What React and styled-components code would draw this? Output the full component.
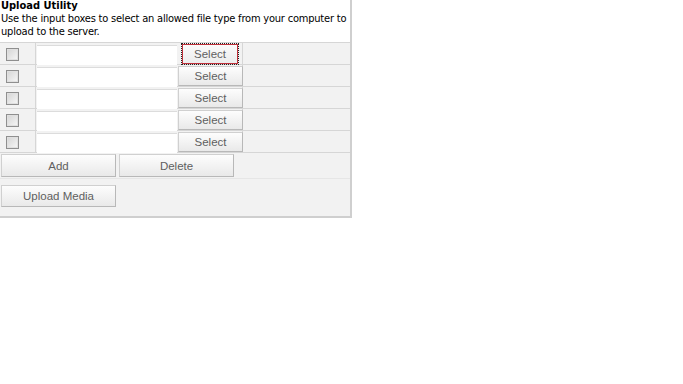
import React from "react";
import styled, { createGlobalStyle } from "styled-components";

const GlobalStyle = createGlobalStyle`
  body {
    margin: 0;
    background: white;
    font-family: "DejaVu Sans Condensed", "DejaVu Sans", Tahoma, sans-serif;
    font-size: 11px;
    color: black;
  }
`;

const Panel = styled.div`
  width: 350px;
  background: #f2f2f2;
  border-right: 2px solid #cfcfcf;
  border-bottom: 2px solid #cfcfcf;
  padding-bottom: 9px;
`;

const Header = styled.div`
  background: white;
  padding: 0 0 4px 1px;
`;

const Title = styled.div`
  font-weight: bold;
  font-size: 11px;
  line-height: 12px;
`;

const Intro = styled.div`
  line-height: 13px;
  letter-spacing: -0.2px;
`;

const FileTable = styled.div`
  border-top: 1px solid #d6d6d6;
  border-bottom: 1px solid #d6d6d6;
`;

const FileRow = styled.div`
  display: grid;
  grid-template-columns: 36px 141px 66px 1fr;
  height: 21px;
  border-bottom: 1px solid #d6d6d6;
  &:last-child {
    border-bottom: none;
  }
`;

const CheckCell = styled.div`
  display: flex;
  align-items: center;
  padding-left: 6px;
  border-right: 1px solid #d6d6d6;
`;

const CheckBox = styled.span`
  width: 11px;
  height: 11px;
  border: 1px solid #8f8f8f;
  background: linear-gradient(135deg, #d4d4d4, #f7f7f7);
  box-shadow: inset 0 0 0 1px #e0e0e0;
`;

const InputCell = styled.div`
  padding: 2px 0 0 1px;
`;

const TextBox = styled.div`
  height: 19px;
  background: white;
  border-top: 1px solid #dcdcdc;
`;

const ButtonCell = styled.div`
  padding: 1px 0 0 1px;
  border-right: 1px solid #d6d6d6;
`;

const Button = styled.button`
  display: block;
  width: ${(p) => p.$width}px;
  height: ${(p) => p.$height || 20}px;
  margin: 0;
  padding: 0;
  font-family: "Liberation Sans", Arial, sans-serif;
  font-size: 11.5px;
  color: #5f5f5f;
  background: linear-gradient(#fdfdfd, #e9e9e9);
  border: 1px solid #d0d0d0;
  border-right-color: #b8b8b8;
  border-bottom-color: #b8b8b8;
  border-radius: 0;
  outline: none;
`;

const FocusedButton = styled(Button)`
  margin-left: 4px;
  border: 1px solid #c0303a;
  outline: 1px dotted #222;
  outline-offset: 0;
  background: linear-gradient(#fbfbfb, #ececec);
`;

const ActionRow = styled.div`
  display: flex;
  gap: 3px;
  padding: 1px 0 0 1px;
  height: 24px;
  border-bottom: 1px solid #e6e6e6;
`;

const UploadRow = styled.div`
  padding: 6px 0 0 1px;
`;

const rows = [0, 1, 2, 3, 4];

export default function App() {
  return (
    <>
      <GlobalStyle />
      <Panel>
        <Header>
          <Title>Upload Utility</Title>
          <Intro>
            Use the input boxes to select an allowed file type from your computer to
            upload to the server.
          </Intro>
        </Header>
        <FileTable>
          {rows.map((i) => (
            <FileRow key={i}>
              <CheckCell>
                <CheckBox />
              </CheckCell>
              <InputCell>
                <TextBox />
              </InputCell>
              <ButtonCell>
                {i === 0 ? (
                  <FocusedButton $width={56}>Select</FocusedButton>
                ) : (
                  <Button $width={65}>Select</Button>
                )}
              </ButtonCell>
              <div />
            </FileRow>
          ))}
        </FileTable>
        <ActionRow>
          <Button $width={115} $height={23}>Add</Button>
          <Button $width={115} $height={23}>Delete</Button>
        </ActionRow>
        <UploadRow>
          <Button $width={115} $height={22}>Upload Media</Button>
        </UploadRow>
      </Panel>
    </>
  );
}
